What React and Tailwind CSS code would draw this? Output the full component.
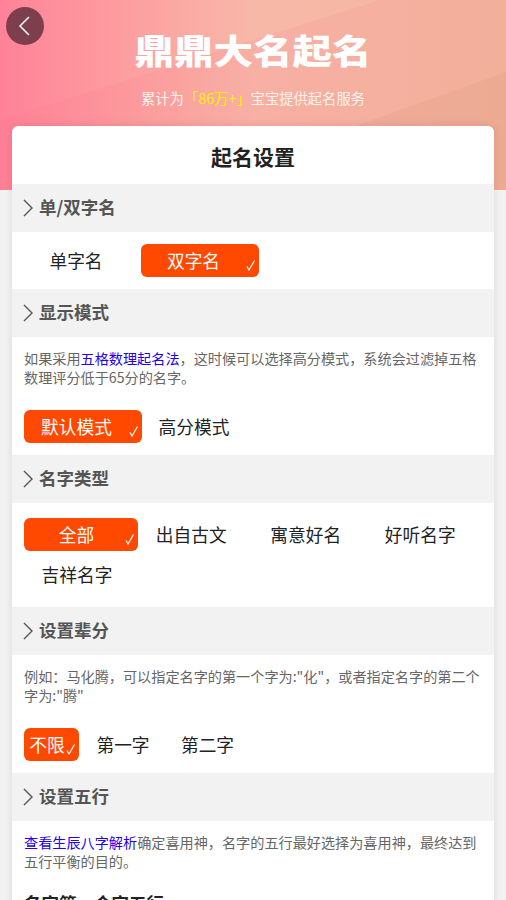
const font = { fontFamily: '"Noto Sans CJK SC", "Noto Sans", sans-serif' }

function Chevron({ className }) {
  return (
    <svg viewBox="0 0 10 18" fill="none" stroke="currentColor" className={className}>
      <path d="M1 1l8 8-8 8" strokeWidth="1.4" />
    </svg>
  )
}

function Heading({ children }) {
  return (
    <div className="flex h-12 items-center bg-[#f2f2f2] pl-[11px] text-[17.5px] font-bold text-[#555]">
      <Chevron className="mr-[6px] h-[18px] w-[10px] text-[#555]" />
      <span className="-mt-[2px]">{children}</span>
    </div>
  )
}

function Chip({ active, className = '', tail = 'pr-[9px]', children }) {
  if (!active) {
    return <div className={`flex h-[33px] shrink-0 items-center justify-center text-[17.7px] text-[#222] ${tail} ${className}`}>{children}</div>
  }
  return (
    <div className={`relative flex h-[33px] shrink-0 items-center justify-center rounded-md bg-[#ff4800] text-[17.7px] text-white ${tail} ${className}`}>
      {children}
      <svg viewBox="0 0 10 11" fill="none" stroke="white" className="absolute bottom-[6px] right-[3px] h-[11px] w-[10px]">
        <path d="M1 6.5l2 3.5 5.5-9.5" strokeWidth="1.2" />
      </svg>
    </div>
  )
}

function Note({ children }) {
  return <p className="px-3 pt-3 text-[14.15px] leading-[19px] text-[#666]">{children}</p>
}

export default function App() {
  return (
    <div className="relative h-[900px] overflow-hidden bg-[#f2f2f2]" style={font}>
      <div className="relative h-[190px] overflow-hidden bg-gradient-to-r from-[#ff8298] via-[#f8b8a8] via-50% to-[#f2b79e]">
        <svg viewBox="0 0 506 190" className="absolute inset-0 h-full w-full">
          <polygon points="0,120 380,0 506,0 506,190 0,190" fill="#f46a7c" opacity="0.1" />
          <polygon points="177,190 506,72 506,190" fill="#dc9a7c" opacity="0.22" />
        </svg>
        <button className="absolute left-[6px] top-[7px] flex h-[38px] w-[38px] items-center justify-center rounded-full bg-[#7c3f4b]">
          <svg viewBox="0 0 12 20" fill="none" stroke="white" className="mr-[3px] h-5 w-3">
            <path d="M11 1L2 10l9 9" strokeWidth="1.5" />
          </svg>
        </button>
        <div className="relative scale-y-[0.86] pt-[26px] text-center text-[39.5px] leading-[50px] font-black text-white">鼎鼎大名起名</div>
        <p className="relative mt-[12px] text-center text-[14.3px] leading-5 text-[#fff3ec]">
          累计为<span className="text-[#fff200]">「86万+」</span>宝宝提供起名服务
        </p>
      </div>

      <div className="relative mx-3 -mt-16 rounded-t-md bg-white shadow-[0_0_8px_rgba(0,0,0,0.1)]">
        <h1 className="flex h-[58px] items-center justify-center pt-[3px] text-[21px] font-bold text-[#222]">起名设置</h1>

        <Heading>单/双字名</Heading>
        <div className="flex h-[57px] items-center px-3">
          <Chip tail="pr-[13px]" className="w-[117px]">单字名</Chip>
          <Chip active tail="pr-[13px]" className="w-[118px]">双字名</Chip>
        </div>

        <Heading>显示模式</Heading>
        <Note>如果采用<span className="text-[#2200ee]">五格数理起名法</span>，这时候可以选择高分模式，系统会过滤掉五格数理评分低于65分的名字。</Note>
        <div className="flex h-[68px] items-center px-3 pt-[11px]">
          <Chip active tail="pr-[13px]" className="w-[118px]">默认模式</Chip>
          <Chip tail="pr-0" className="w-[104px]">高分模式</Chip>
        </div>

        <Heading>名字类型</Heading>
        <div className="grid h-[104px] grid-cols-4 content-start gap-y-[7px] px-3 pt-[15px]">
          <Chip active className="w-[114px]">全部</Chip>
          <Chip>出自古文</Chip>
          <Chip>寓意好名</Chip>
          <Chip>好听名字</Chip>
          <Chip tail="pr-0" className="w-[106px]">吉祥名字</Chip>
        </div>

        <Heading>设置辈分</Heading>
        <Note>例如：马化腾，可以指定名字的第一个字为:"化"，或者指定名字的第二个字为:"腾"</Note>
        <div className="flex h-[68px] items-center px-3 pt-[11px]">
          <Chip active className="w-[55px]">不限</Chip>
          <Chip tail="pr-0" className="w-[88px]">第一字</Chip>
          <Chip tail="pr-0" className="w-[81px]">第二字</Chip>
        </div>

        <Heading>设置五行</Heading>
        <Note><span className="text-[#2200ee]">查看生辰八字解析</span>确定喜用神，名字的五行最好选择为喜用神，最终达到五行平衡的目的。</Note>
        <p className="px-3 pt-[19px] text-[17.5px] font-bold text-[#222]">名字第一个字五行</p>
      </div>
    </div>
  )
}
